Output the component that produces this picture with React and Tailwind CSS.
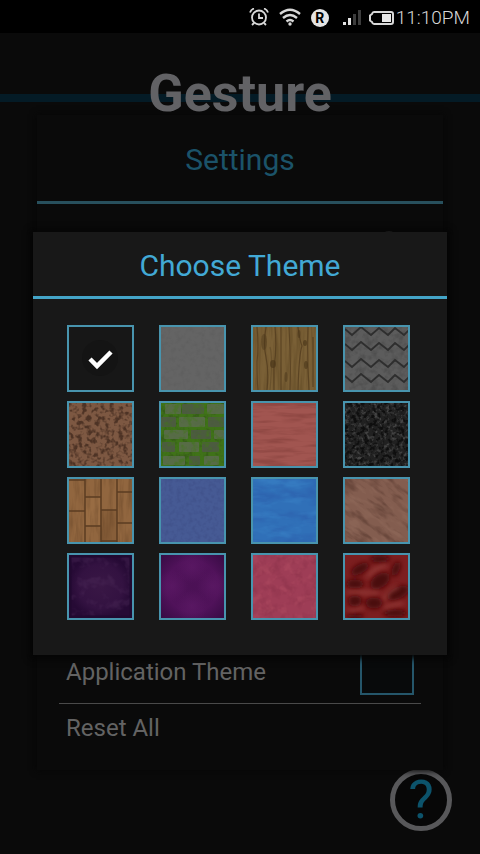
import { useState } from "react";

function Noise({ id, freq, color, gain = 4, offset = -1.9, octaves = 3, seed = 1, opacity = 1 }) {
  const [r, g, b] = color;
  return (
    <>
      <filter id={id} x="0" y="0" width="100%" height="100%" colorInterpolationFilters="sRGB">
        <feTurbulence type="fractalNoise" baseFrequency={freq} numOctaves={octaves} seed={seed} />
        <feColorMatrix
          values={`0 0 0 0 ${r / 255} 0 0 0 0 ${g / 255} 0 0 0 0 ${b / 255} ${gain} 0 0 0 ${offset}`}
        />
      </filter>
      <rect width="63" height="63" filter={`url(#${id})`} opacity={opacity} />
    </>
  );
}

function Base({ fill }) {
  return <rect width="63" height="63" fill={fill} />;
}

function Plain() {
  return (
    <>
      <Base fill="#171717" />
      <circle cx="31" cy="31" r="18" fill="#141414" />
    </>
  );
}

function Stone() {
  return (
    <>
      <Base fill="#646464" />
      <Noise id="stone" freq="0.2" color={[84, 84, 84]} gain={3} offset={-1.4} opacity={0.25} />
    </>
  );
}

function Wood() {
  return (
    <>
      <Base fill="#7a6036" />
      <Noise id="wood" freq="0.25 0.02" color={[92, 69, 34]} gain={4} offset={-1.7} opacity={0.4} />
      <g fill="none" stroke="#513b1d" strokeWidth="1.2">
        <path d="M4 0q2 20 0 35q0 18 1 28M13 0q-3 18 0 30q3 15 1 33M22 0q2 22 -1 40v23M28 0v63M36 0q2 30 1 63M45 0q2 15 4 19q-3 8 -4 44M55 0q-1 30 1 63M60 10v50" opacity="0.75" />
        <path d="M17 20q3 10 0 43" opacity="0.4" />
      </g>
      <g fill="#493519">
        <ellipse cx="11" cy="15" rx="3" ry="8" opacity="0.4" />
        <ellipse cx="20" cy="37" rx="3" ry="4" opacity="0.65" />
        <ellipse cx="52" cy="16" rx="2" ry="3" opacity="0.65" />
        <ellipse cx="53" cy="38" rx="2" ry="4" opacity="0.6" />
        <ellipse cx="33" cy="50" rx="1.5" ry="5" opacity="0.5" />
        <ellipse cx="46" cy="7" rx="1.5" ry="4" opacity="0.5" />
      </g>
    </>
  );
}

function Zigzag() {
  return (
    <>
      <Base fill="#5c5c5c" />
      <Noise id="slate" freq="0.15" color={[62, 62, 62]} gain={3} offset={-1.3} opacity={0.4} />
      {[2, 17, 34, 49].map((y) => (
        <path
          key={y}
          d={`M0 ${y}l7 6l9 -8l10 8l8 -7l9 7l7 -7l9 7l5 -5`}
          fill="none"
          stroke="#2e2e2e"
          strokeWidth="1.8"
        />
      ))}
    </>
  );
}

function Dirt() {
  return (
    <>
      <Base fill="#7d5842" />
      <Noise id="dirt" freq="0.22" color={[66, 42, 30]} gain={4} offset={-1.8} octaves={2} opacity={0.8} seed={4} />
    </>
  );
}

function MossBrick() {
  const bricks = [
    [4, 1, 16, 10], [21, 1, 22, 10], [46, 1, 17, 10],
    [0, 14, 15, 10], [18, 14, 26, 10], [47, 14, 16, 10],
    [3, 27, 24, 9], [30, 27, 20, 9], [53, 27, 10, 9],
    [1, 39, 13, 10], [18, 39, 20, 10], [41, 39, 17, 10],
    [2, 53, 22, 9], [28, 53, 11, 9], [43, 53, 15, 9],
  ];
  return (
    <>
      <Base fill="#3f7218" />
      <Noise id="mossDark" freq="0.18" color={[42, 62, 26]} gain={4} offset={-2} opacity={0.4} seed={3} />
      {bricks.map(([x, y, w, h], i) => (
        <rect key={i} x={x} y={y} width={w} height={h} fill={i % 2 ? "#4e5a44" : "#5a6c4b"} rx="1" opacity="0.9" />
      ))}
      <Noise id="mossLight" freq="0.16" color={[66, 118, 26]} gain={4} offset={-2} opacity={0.55} seed={12} />
    </>
  );
}

function RedWood() {
  return (
    <>
      <Base fill="#a15550" />
      <Noise id="redDark" freq="0.03 0.2" color={[122, 56, 52]} gain={3} offset={-1.3} opacity={0.45} seed={5} />
    </>
  );
}

function Coal() {
  return (
    <>
      <Base fill="#212121" />
      <Noise id="coalLight" freq="0.24" color={[78, 78, 78]} gain={4} offset={-1.95} seed={7} opacity={0.8} />
      <Noise id="coalDark" freq="0.25" color={[8, 8, 8]} gain={5} offset={-2.4} seed={22} opacity={0.75} />
    </>
  );
}

function Planks() {
  return (
    <>
      <Base fill="#91663f" />
      <rect x="16" y="18" width="15" height="28" fill="#986c43" />
      <rect x="32" y="31" width="16" height="32" fill="#875e39" />
      <Noise id="planks" freq="0.2 0.03" color={[104, 70, 40]} gain={3} offset={-1.3} opacity={0.45} seed={9} />
      <path
        d="M16 0v63M32 0v63M48 0v63M0 32h16M16 18h16M16 47h16M32 31h16M48 13h15M48 44h15M0 1h16M32 62h16"
        stroke="#5b3c22"
        strokeWidth="1.5"
        fill="none"
      />
    </>
  );
}

function Denim() {
  return (
    <>
      <Base fill="#465a94" />
      <Noise id="denim" freq="0.25" color={[58, 72, 128]} gain={3} offset={-1.3} opacity={0.35} seed={6} />
    </>
  );
}

function Water() {
  return (
    <>
      <Base fill="#3070b8" />
      <Noise id="waterDeep" freq="0.04 0.09" color={[44, 92, 170]} gain={3} offset={-1.3} opacity={0.5} seed={2} />
      <Noise id="waterLight" freq="0.04 0.12" color={[62, 138, 204]} gain={4} offset={-2} opacity={0.4} seed={8} />
    </>
  );
}

function Clay() {
  return (
    <>
      <Base fill="#835d4f" />
      <g transform="rotate(35 31 31) scale(1.5) translate(-12 -12)">
        <Noise id="clay" freq="0.07 0.22" color={[77, 47, 38]} gain={4} offset={-1.9} opacity={0.45} seed={3} />
        <Noise id="clayLight" freq="0.09 0.25" color={[152, 114, 98]} gain={4} offset={-2} opacity={0.35} seed={14} />
      </g>
    </>
  );
}

function DarkPurple() {
  return (
    <>
      <radialGradient id="plumGlow">
        <stop offset="0" stopColor="#391745" />
        <stop offset="0.7" stopColor="#331241" />
        <stop offset="1" stopColor="#260a35" />
      </radialGradient>
      <Base fill="url(#plumGlow)" />
      <Noise id="plum" freq="0.09" color={[80, 46, 92]} gain={4} offset={-2} opacity={0.35} seed={5} />
      <rect x="1" y="1" width="61" height="61" fill="none" stroke="#210930" strokeWidth="3" />
    </>
  );
}

function Violet() {
  return (
    <>
      <radialGradient id="violetEdge" r="0.75">
        <stop offset="0" stopColor="#4b1155" />
        <stop offset="0.55" stopColor="#50125a" />
        <stop offset="1" stopColor="#330a40" />
      </radialGradient>
      <radialGradient id="violetSpot">
        <stop offset="0" stopColor="#5f1b68" stopOpacity="0.6" />
        <stop offset="1" stopColor="#5f1b68" stopOpacity="0" />
      </radialGradient>
      <Base fill="url(#violetEdge)" />
      <circle cx="31" cy="12" r="16" fill="url(#violetSpot)" />
      <circle cx="31" cy="51" r="16" fill="url(#violetSpot)" />
      <circle cx="11" cy="31" r="16" fill="url(#violetSpot)" />
      <circle cx="52" cy="31" r="16" fill="url(#violetSpot)" />
    </>
  );
}

function Rose() {
  return (
    <>
      <Base fill="#9e3d56" />
      <Noise id="roseDark" freq="0.1" color={[130, 44, 68]} gain={3} offset={-1.3} opacity={0.35} seed={2} />
      <Noise id="roseLight" freq="0.1" color={[184, 82, 102]} gain={4} offset={-2} opacity={0.35} seed={11} />
    </>
  );
}

function Lava() {
  return (
    <>
      <filter id="lavaSoft" x="-20%" y="-20%" width="140%" height="140%">
        <feGaussianBlur stdDeviation="2.5" />
      </filter>
      <Base fill="#7c1e1f" />
      <g filter="url(#lavaSoft)" fill="#4a0708">
        <ellipse cx="35" cy="4" rx="10" ry="4" />
        <ellipse cx="15" cy="14" rx="10" ry="5" transform="rotate(-30 15 14)" />
        <ellipse cx="51" cy="14" rx="4" ry="8" transform="rotate(20 51 14)" />
        <ellipse cx="35" cy="26" rx="11" ry="7" transform="rotate(-35 35 26)" />
        <ellipse cx="10" cy="29" rx="9" ry="5" />
        <ellipse cx="53" cy="38" rx="12" ry="6" transform="rotate(-25 53 38)" />
        <ellipse cx="10" cy="46" rx="7" ry="6" />
        <ellipse cx="29" cy="48" rx="9" ry="6" />
        <ellipse cx="50" cy="58" rx="12" ry="4" />
        <ellipse cx="10" cy="61" rx="9" ry="3" />
      </g>
      <g filter="url(#lavaSoft)" stroke="#a04a44" strokeWidth="3" fill="none" opacity="0.8">
        <path d="M22 22q8 -10 20 -12M14 37q12 2 20 0M39 46q2 -10 14 -14M3 37h12M4 56q10 -2 14 -4M38 54q8 -4 20 -6" />
      </g>
    </>
  );
}

const themes = [
  ["Plain dark", Plain],
  ["Stone", Stone],
  ["Wood", Wood],
  ["Zigzag slate", Zigzag],
  ["Dirt", Dirt],
  ["Mossy brick", MossBrick],
  ["Red wood", RedWood],
  ["Coal", Coal],
  ["Planks", Planks],
  ["Denim", Denim],
  ["Water", Water],
  ["Clay", Clay],
  ["Dark purple", DarkPurple],
  ["Violet", Violet],
  ["Rose", Rose],
  ["Lava", Lava],
];

function StatusBar() {
  return (
    <div className="flex h-[33px] items-center justify-end bg-black pt-0.5 pr-2.5 text-[#d8d8d8]">
      <svg className="mr-2.5 h-5 w-5" viewBox="0 0 20 20" fill="none" stroke="currentColor" strokeWidth="1.8" aria-label="Alarm">
        <circle cx="10" cy="9.5" r="7" />
        <path d="M10 5.500v4.500h4M1 4.500q1 -3 4 -4M19 4.500q-1 -3 -4 -4" />
        <path d="M5 15l-2 2M15 15l2 2" />
      </svg>
      <svg className="mr-2.5 h-5 w-[22px]" viewBox="0 0 22 20" fill="none" stroke="currentColor" strokeWidth="2.4" aria-label="Wi-Fi">
        <path d="M1 6q10 -8.500 20 0M4 10q7 -6 14 0M7.500 13.500q3.500 -3 7 0" />
        <circle cx="11" cy="16" r="1.700" fill="currentColor" stroke="none" />
      </svg>
      <span className="mr-3.5 flex h-[18px] w-[18px] items-center justify-center rounded-full bg-[#e4e4e4] text-sm font-bold text-black">
        R
      </span>
      <svg className="mr-2 h-5 w-[18px]" viewBox="0 0 18 20" aria-label="Signal">
        <path d="M0 14h3v3H0zM5 10h3v7H5z" fill="#e4e4e4" />
        <path d="M10 6h3v11h-3zM15 2h3v15h-3z" fill="#3c3c3c" />
      </svg>
      <svg className="mr-0.5 h-5 w-[25px]" viewBox="0 0 25 20" aria-label="Battery">
        <path d="M5 4h17q2 0 2 2v8q0 2 -2 2H5q-1.500 0 -2 -2l-2 -1.500v-5l2 -1.500q.5 -2 2 -2z" fill="none" stroke="#d8d8d8" strokeWidth="2" />
        <rect x="13" y="6" width="9" height="8" fill="#e8e8e8" />
      </svg>
      <time className="text-[19px] leading-5 font-light">11:10PM</time>
    </div>
  );
}

function SettingsPage() {
  return (
    <div className="flex flex-1 flex-col">
      <header className="grid h-[82px] grid-cols-1 grid-rows-1 pt-8">
        <div className="col-start-1 row-start-1 mt-[29px] h-2 bg-[#041b26]" />
        <h1 className="relative z-20 col-start-1 row-start-1 h-14 pt-px text-center text-[52px] leading-[56px] font-bold text-[#626265]">
          Gesture
        </h1>
      </header>
      <main className="relative z-10 mx-[37px] flex flex-1 flex-col bg-[#0a0a0a] shadow-[0_0_6px_1px_#070707]">
        <h2 className="flex h-[89px] items-center justify-center border-b-[3px] border-[#28505d] pt-1 text-3xl text-[#1b5369]">
          Settings
        </h2>
        <span className="mt-[27px] mr-[46px] h-4 w-4 self-end rounded-full border-2 border-[#444]" />
        <div className="mx-[22px] mt-auto flex h-[64px] items-center justify-between border-b border-[#4a4a4a] px-[7px] text-2xl text-[#636363]">
          <label htmlFor="app-theme">Application Theme</label>
          <input
            id="app-theme"
            type="checkbox"
            className="mb-2 h-[54px] w-[54px] appearance-none border-2 border-[#25566a] bg-[#080a0b]"
          />
        </div>
        <button type="button" className="mx-[22px] mb-[18px] h-12 pl-[7px] text-left text-2xl text-[#636363]">
          Reset All
        </button>
      </main>
      <button
        type="button"
        aria-label="Help"
        className="mr-7 -mt-px mb-[23px] flex h-[62px] w-[62px] items-center justify-center self-end rounded-full border-[5px] border-[#58585a] bg-[#070707] text-[54px] leading-none text-[#0c536b]"
      >
        ?
      </button>
    </div>
  );
}

function ThemeDialog() {
  const [selected, setSelected] = useState(0);
  return (
    <div className="absolute inset-0 z-20 flex items-center justify-center px-[33px]">
      <section
        role="dialog"
        aria-label="Choose Theme"
        className="w-full bg-[#181818] shadow-[0_1px_6px_3px_#050505]"
      >
        <h2 className="flex h-[67px] items-center justify-center border-b-[3px] border-[#44a5c8] pt-1 text-3xl text-[#42a9d5]">
          Choose Theme
        </h2>
        <div className="grid grid-cols-[repeat(4,67px)] justify-center gap-x-[25px] gap-y-[9px] pt-[26px] pr-1 pb-[35px]">
          {themes.map(([name, Texture], i) => (
            <label key={name} className="grid h-[67px] w-[67px] cursor-pointer grid-cols-1 grid-rows-1 border-2 border-[#4894ae]">
              <svg className="col-start-1 row-start-1 h-full w-full overflow-hidden" viewBox="0 0 63 63" aria-hidden="true">
                <Texture />
                {selected === i && <path d="M21 32l7 7l14 -14" fill="none" stroke="#fff" strokeWidth="4.500" />}
              </svg>
              <input
                type="radio"
                name="theme"
                aria-label={name}
                checked={selected === i}
                onChange={() => setSelected(i)}
                className="col-start-1 row-start-1 h-full w-full appearance-none"
              />
            </label>
          ))}
        </div>
      </section>
    </div>
  );
}

export default function App() {
  return (
    <div className="flex min-h-screen flex-col bg-[#0a0a0a] font-['Roboto','Liberation_Sans',sans-serif]">
      <StatusBar />
      <div className="relative flex flex-1 flex-col">
        <SettingsPage />
        <ThemeDialog />
      </div>
    </div>
  );
}
